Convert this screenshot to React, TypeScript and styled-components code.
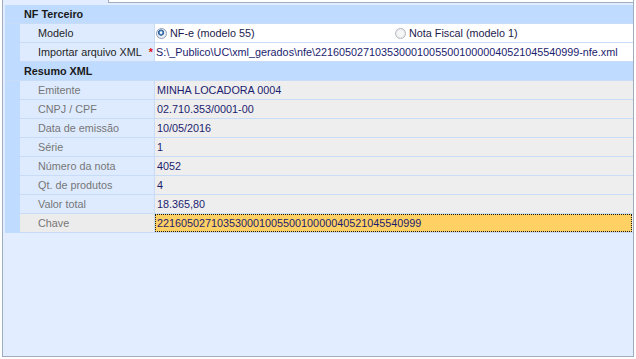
import styled, { createGlobalStyle } from 'styled-components';

type Field = {
  label: string;
  value: string;
  focused?: boolean;
};

const resumo: Field[] = [
  { label: 'Emitente', value: 'MINHA LOCADORA 0004' },
  { label: 'CNPJ / CPF', value: '02.710.353/0001-00' },
  { label: 'Data de emissão', value: '10/05/2016' },
  { label: 'Série', value: '1' },
  { label: 'Número da nota', value: '4052' },
  { label: 'Qt. de produtos', value: '4' },
  { label: 'Valor total', value: '18.365,80' },
  { label: 'Chave', value: '22160502710353000100550010000040521045540999', focused: true },
];

const GlobalStyle = createGlobalStyle`
  html, body {
    margin: 0;
    padding: 0;
    background: #ffffff;
  }
  body {
    font-family: Tahoma, "Liberation Sans", Arial, sans-serif;
    font-size: 10.8px;
  }
`;

const Radio = ({ checked, label }: { checked?: boolean; label: string }) => (
  <RadioOption>
    <RadioCircle $checked={checked} />
    <RadioText>{label}</RadioText>
  </RadioOption>
);

const App = () => {
  return (
    <>
      <GlobalStyle />
      <Page>
        <TabEdge>
          <TabJoin />
          <TabRest />
        </TabEdge>
        <Frame>
          <GroupHeader>NF Terceiro</GroupHeader>
          <GroupBody>
            <Indent />
            <Rows>
              <Row>
                <Label>Modelo</Label>
                <Value $editable>
                  <RadioGroup>
                    <Radio checked label="NF-e (modelo 55)" />
                    <Radio label="Nota Fiscal (modelo 1)" />
                  </RadioGroup>
                </Value>
              </Row>
              <Row>
                <Label>
                  <span>Importar arquivo XML</span>
                  <Required>*</Required>
                </Label>
                <Value $editable>
                  <ValueText $pad={1}>
                    S:\_Publico\UC\xml_gerados\nfe\22160502710353000100550010000040521045540999-nfe.xml
                  </ValueText>
                </Value>
              </Row>
            </Rows>
          </GroupBody>

          <GroupHeader>Resumo XML</GroupHeader>
          <GroupBody>
            <Indent />
            <Rows>
              {resumo.map((f) => (
                <Row key={f.label}>
                  <Label $readonly $focused={f.focused}>
                    {f.label}
                  </Label>
                  <Value>
                    {f.focused ? (
                      <FocusBox>{f.value}</FocusBox>
                    ) : (
                      <ValueText $pad={2}>{f.value}</ValueText>
                    )}
                  </Value>
                </Row>
              ))}
            </Rows>
          </GroupBody>
        </Frame>
      </Page>
    </>
  );
};

const Page = styled.div`
  width: 636px;
  height: 359px;
  box-sizing: border-box;
  padding: 0 2px 2px 2px;
  display: flex;
  flex-direction: column;
  background: #ffffff;
`;

const TabEdge = styled.div`
  display: flex;
  height: 3px;
  flex: 0 0 auto;
`;

const TabJoin = styled.div`
  width: 105px;
  border-left: 1px solid #a0acbf;
  border-right: 1px solid #a0acbf;
  background: #e2eeff;
`;

const TabRest = styled.div`
  flex: 1;
  border-bottom: 1px solid #a0acbf;
  border-right: 1px solid #a0acbf;
`;

const Frame = styled.div`
  flex: 1;
  border: 1px solid #a0acbf;
  border-top: none;
  background: #e2eeff;
  padding: 2px 0 0 2px;
  display: flex;
  flex-direction: column;
`;

const GroupHeader = styled.div`
  height: 18px;
  line-height: 18px;
  border-bottom: 1px solid #c8dcf7;
  background: #bfdbff;
  padding-left: 19px;
  font-weight: bold;
  color: #1a1a1a;
`;

const GroupBody = styled.div`
  display: flex;
`;

const Indent = styled.div`
  width: 15px;
  flex: 0 0 auto;
  background: #bfdbff;
`;

const Rows = styled.div`
  flex: 1;
  display: flex;
  flex-direction: column;
`;

const Row = styled.div`
  display: flex;
  height: 18px;
  border-bottom: 1px solid #c8dcf7;
`;

const Label = styled.div<{ $readonly?: boolean; $focused?: boolean }>`
  width: 135px;
  flex: 0 0 auto;
  box-sizing: border-box;
  border-right: 1px solid #c8dcf7;
  padding-left: 18px;
  display: flex;
  align-items: center;
  justify-content: space-between;
  background: ${({ $focused }) => ($focused ? '#ececec' : '#deebfe')};
  color: ${({ $readonly }) => ($readonly ? '#767676' : '#1e1e1e')};
  white-space: nowrap;
`;

const Required = styled.span`
  color: #e01010;
  font-weight: bold;
  padding-right: 1px;
`;

const Value = styled.div<{ $editable?: boolean }>`
  flex: 1;
  min-width: 0;
  display: flex;
  align-items: center;
  background: ${({ $editable }) => ($editable ? '#ffffff' : '#eeeeee')};
  color: #1c1c6e;
  white-space: nowrap;
  overflow: hidden;
`;

const ValueText = styled.span<{ $pad: number }>`
  padding-left: ${({ $pad }) => $pad}px;
`;

const FocusBox = styled.div`
  align-self: stretch;
  flex: 1;
  margin: 0 1px 0 0;
  border: 1px dotted #1a1a1a;
  background: #ffd064;
  padding-left: 1px;
  display: flex;
  align-items: center;
  color: #1c1c6e;
`;

const RadioGroup = styled.div`
  flex: 1;
  display: grid;
  grid-template-columns: 1fr 1fr;
`;

const RadioOption = styled.label`
  display: flex;
  align-items: center;
  gap: 3px;
  padding-left: 1px;
`;

const RadioCircle = styled.span<{ $checked?: boolean }>`
  width: 11px;
  height: 11px;
  box-sizing: border-box;
  border-radius: 50%;
  border: 1px solid ${({ $checked }) => ($checked ? '#8b9db6' : '#b4b9c1')};
  background: ${({ $checked }) =>
    $checked
      ? 'radial-gradient(circle at 45% 40%, #ffffff 0 12%, #4d86c2 22%, #2d5f98 38%, #e6ecf4 46%, #f4f6f9 100%)'
      : 'radial-gradient(circle at 50% 50%, #f6f6f6 0 45%, #d9dcdf 100%)'};
`;

const RadioText = styled.span`
  color: #1c1c4e;
`;

export default App;
